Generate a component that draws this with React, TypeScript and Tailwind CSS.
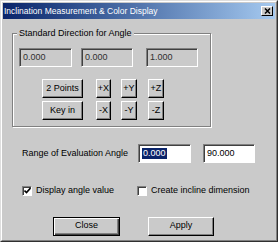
const bevelBtn =
  'flex items-center justify-center h-[19px] border border-t-white border-l-white border-r-black border-b-black shadow-[inset_-1px_-1px_0_#808080] text-black';

const sunken =
  'flex items-center h-[19px] border border-t-[#808080] border-l-[#808080] border-r-white border-b-white shadow-[inset_1px_1px_0_#404040] pl-[3px]';

function CheckBox({ on }: { on?: boolean }) {
  return (
    <div className="w-[10px] h-[10px] shrink-0 bg-white border border-t-[#808080] border-l-[#808080] border-r-white border-b-white shadow-[inset_1px_1px_0_#404040] flex items-center justify-center">
      {on && (
        <svg width="7" height="7" viewBox="0 0 7 7">
          <path d="M0.5 3.5 L2.5 5.5 L6.5 1" fill="none" stroke="#000" strokeWidth={1.6} />
        </svg>
      )}
    </div>
  );
}

export default function App() {
  return (
    <div className="w-[278px] h-[242px] bg-[#cacaca] border border-t-[#dedede] border-l-[#dedede] border-r-[#303030] border-b-[#303030] font-['Liberation_Sans',Arial,sans-serif] text-[9px] text-black">
      <div className="h-full border border-t-white border-l-white border-r-[#808080] border-b-[#808080] p-px flex flex-col">
        {/* Title bar */}
        <div className="h-[16px] shrink-0 flex items-center justify-between pl-[1px] pr-[2px] bg-gradient-to-r from-[#0a246a] to-[#a6caf0]">
          <span className="text-white text-[8.5px] leading-none">Inclination Measurement &amp; Color Display</span>
          <div className="w-[12px] h-[10px] bg-[#cacaca] border border-t-white border-l-white border-r-black border-b-black flex items-center justify-center">
            <svg width="7" height="6" viewBox="0 0 7 6">
              <path d="M1 0.5 L6 5.5 M6 0.5 L1 5.5" stroke="#000" strokeWidth={1.5} />
            </svg>
          </div>
        </div>

        {/* Group box */}
        <div className="relative mt-[14px] ml-[9px] w-[199px] h-[94px] border border-[#808080] shadow-[inset_1px_1px_0_#fff,1px_1px_0_#fff] pt-[14px] pl-[6px]">
          <span className="absolute left-[4px] top-[-7px] px-[2px] bg-[#cacaca] leading-[12px]">
            Standard Direction for Angle
          </span>
          <div className="flex">
            <div className={`${sunken} w-[53px] text-[#303030]`}>0.000</div>
            <div className={`${sunken} ml-[9px] w-[52px] text-[#303030]`}>0.000</div>
            <div className={`${sunken} ml-[13px] w-[52px] text-[#303030]`}>1.000</div>
          </div>
          <div className="flex mt-[12px] ml-[23px]">
            <div className={`${bevelBtn} w-[41px]`}>2 Points</div>
            <div className={`${bevelBtn} ml-[13px] w-[15px]`}>+X</div>
            <div className={`${bevelBtn} ml-[10px] w-[16px]`}>+Y</div>
            <div className={`${bevelBtn} ml-[11px] w-[16px]`}>+Z</div>
          </div>
          <div className="flex mt-[3px] ml-[23px]">
            <div className={`${bevelBtn} w-[41px]`}>Key in</div>
            <div className={`${bevelBtn} ml-[13px] w-[15px]`}>-X</div>
            <div className={`${bevelBtn} ml-[10px] w-[16px]`}>-Y</div>
            <div className={`${bevelBtn} ml-[11px] w-[16px]`}>-Z</div>
          </div>
        </div>

        {/* Range */}
        <div className="flex items-center mt-[17px] ml-[19px]">
          <span className="w-[116px]">Range of Evaluation Angle</span>
          <div className={`${sunken} h-[17px] w-[53px] bg-white pl-[2px]`}>
            <span className="bg-[#0a246a] text-white px-px leading-[11px]">0.000</span>
          </div>
          <div className={`${sunken} h-[17px] ml-[12px] w-[52px] bg-white`}>90.000</div>
        </div>

        {/* Checkboxes */}
        <div className="flex items-center mt-[21px] ml-[19px]">
          <div className="flex items-center w-[115px]">
            <CheckBox on />
            <span className="ml-[4px]">Display angle value</span>
          </div>
          <CheckBox />
          <span className="ml-[4px]">Create incline dimension</span>
        </div>

        {/* Buttons */}
        <div className="flex mt-[19px] ml-[50px]">
          <div className="w-[67px] h-[19px] flex items-center justify-center border border-black shadow-[inset_1px_1px_0_#fff,inset_-1px_-1px_0_#404040,inset_-2px_-2px_0_#808080]">
            Close
          </div>
          <div className={`${bevelBtn} ml-[28px] w-[66px]`}>Apply</div>
        </div>
      </div>
    </div>
  );
}
